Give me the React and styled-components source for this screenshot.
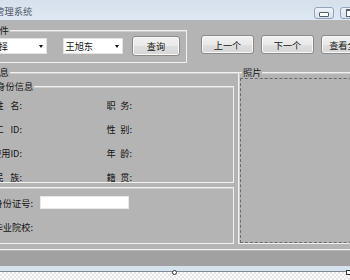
import React from 'react'
import styled, { createGlobalStyle } from 'styled-components'

const GlobalStyle = createGlobalStyle`
  html, body {
    margin: 0;
    padding: 0;
  }
  body {
    font-family: "Noto Sans CJK SC", "Noto Sans", sans-serif;
    font-size: 9.2px;
    color: #141414;
  }
`

function App() {
  return (
    <Viewport>
      <GlobalStyle />
      <Window>
        <TitleBar>
          <TitleText>员工管理系统</TitleText>
          <Controls>
            <CtrlBtn>
              <MinGlyph />
            </CtrlBtn>
            <CtrlBtn>
              <MaxGlyph />
            </CtrlBtn>
            <CtrlBtn $close />
          </Controls>
        </TitleBar>
        <Client>
          <TopRow>
            <ConditionGroup>
              <Legend $left={5}>查询条件</Legend>
              <Combo $w={69} $mr={16}>
                <span>请选择</span>
                <Arrow />
              </Combo>
              <Combo $w={60} $mr={9}>
                <span>王旭东</span>
                <Arrow />
              </Combo>
              <Button $w={48} $h={20}>查询</Button>
            </ConditionGroup>
            <NavButtons>
              <Button $w={53} $h={19}>上一个</Button>
              <Button $w={53} $h={19}>下一个</Button>
              <Button $w={53} $h={19}>查看全部</Button>
            </NavButtons>
          </TopRow>
          <InfoGroup>
            <Legend $left={5}>员工信息</Legend>
            <LeftCol>
              <IdentityGroup>
                <Legend $left={5}>员工身份信息</Legend>
                <Label $right>姓{'\u2002 '}名:</Label>
                <span />
                <Label>职{'\u2002'}务:</Label>
                <Label $right>员工{'\u2002 '}ID:</Label>
                <span />
                <Label>性{'\u2002'}别:</Label>
                <Label $right>使用ID:</Label>
                <span />
                <Label>年{'\u2002'}龄:</Label>
                <Label $right>民{'\u2002 '}族:</Label>
                <span />
                <Label>籍{'\u2002'}贯:</Label>
              </IdentityGroup>
              <DetailGroup>
                <Label $right>身份证号:</Label>
                <TextBox />
                <Label $right>毕业院校:</Label>
                <span />
              </DetailGroup>
            </LeftCol>
            <PhotoGroup>
              <Legend $left={3}>照片</Legend>
              <Picture />
            </PhotoGroup>
          </InfoGroup>
        </Client>
        <StatusBar />
        <BottomFrame />
      </Window>
      <Grip $x={172} $round />
      <Grip $x={346} />
    </Viewport>
  )
}

export default App

const Viewport = styled.div`
  position: relative;
  width: 350px;
  height: 280px;
  overflow: hidden;
  background-color: #f6f6f6;
  background-image: conic-gradient(#e6e6e6 25%, #fbfbfb 0 50%, #e6e6e6 0 75%, #fbfbfb 0);
  background-size: 4px 4px;
`

const Window = styled.div`
  width: 460px;
  margin-left: -56px;
  display: flex;
  flex-direction: column;
`

const TitleBar = styled.div`
  height: 20px;
  display: flex;
  align-items: flex-start;
  padding: 0 6px 0 33px;
  background: linear-gradient(#d5e0ec, #dfe8f2);
  box-sizing: border-box;
`

const TitleText = styled.div`
  margin-top: 5px;
  line-height: 12px;
  color: #4e5865;
`

const Controls = styled.div`
  margin-left: auto;
  margin-top: 7px;
  display: flex;
  gap: 6px;
  & > div:last-child {
    margin-left: -4px;
  }
`

const CtrlBtn = styled.div`
  width: ${(p) => (p.$close ? 36 : 20)}px;
  height: 12px;
  box-sizing: border-box;
  border: 1px solid #93a4ba;
  border-radius: 3px;
  background: linear-gradient(#eef3f9, #d8e2ee);
  display: flex;
  align-items: center;
  justify-content: center;
`

const MinGlyph = styled.span`
  width: 8px;
  height: 3px;
  border: 1px solid #55606e;
  border-radius: 1px;
  background: #fff;
  margin-top: 2px;
`

const MaxGlyph = styled.span`
  width: 6px;
  height: 5px;
  border: 1px solid #55606e;
  border-top-width: 2px;
  background: #fff;
`

const Client = styled.div`
  background: #b4b4b4;
  padding: 10px 10px 1px 21px;
  display: flex;
  flex-direction: column;
  gap: 9px;
`

const TopRow = styled.div`
  display: flex;
  align-items: flex-start;
`

const Group = styled.div`
  position: relative;
  border: 1px solid #f1f1f1;
  box-shadow: inset 1px 1px 0 #cdcdcd;
`

const Legend = styled.span`
  position: absolute;
  top: -7px;
  left: ${(p) => p.$left}px;
  padding: 0 1px;
  line-height: 12px;
  background: #b4b4b4;
  white-space: nowrap;
`

const ConditionGroup = styled(Group)`
  display: flex;
  align-items: center;
  padding: 5px 6px 6px 12px;
`

const Combo = styled.div`
  width: ${(p) => p.$w}px;
  margin-right: ${(p) => p.$mr}px;
  height: 16px;
  box-sizing: border-box;
  border: 1px solid #e2e2e2;
  background: #fff;
  display: flex;
  align-items: center;
  justify-content: space-between;
  padding: 0 3px 0 1.5px;
  line-height: 12px;
  white-space: nowrap;
`

const Arrow = styled.span`
  width: 0;
  height: 0;
  border-left: 2.5px solid transparent;
  border-right: 2.5px solid transparent;
  border-top: 3px solid #111;
`

const Button = styled.div`
  width: ${(p) => p.$w}px;
  height: ${(p) => p.$h}px;
  box-sizing: border-box;
  border: 1px solid #8b8b8b;
  border-radius: 3px;
  background: linear-gradient(#f1f1f1, #e9e9e9 50%, #dfdfdf 50%, #d6d6d6);
  box-shadow: inset 0 0 0 1px #f8f8f8;
  display: flex;
  align-items: center;
  justify-content: center;
  white-space: nowrap;
  overflow: hidden;
  flex-shrink: 0;
`

const NavButtons = styled.div`
  margin: 5px 0 0 14px;
  display: flex;
  gap: 7px;
`

const InfoGroup = styled(Group)`
  display: flex;
  padding: 0 0 5px 5px;
`

const LeftCol = styled.div`
  width: 263px;
  padding-top: 13px;
  margin-right: 4px;
  display: flex;
  flex-direction: column;
  gap: 4px;
`

const IdentityGroup = styled(Group)`
  display: grid;
  grid-template-columns: 50px 84.5px 1fr;
  grid-auto-rows: 10px;
  row-gap: 14px;
  align-items: center;
  padding-top: 13px;
`

const Label = styled.span`
  line-height: 10px;
  white-space: pre;
  justify-self: ${(p) => (p.$right ? 'end' : 'start')};
`

const DetailGroup = styled(Group)`
  display: grid;
  grid-template-columns: 61px 89px;
  grid-template-rows: 13px 10px;
  column-gap: 6.5px;
  row-gap: 12.5px;
  align-items: center;
  padding: 8px 0 11.5px;
`

const TextBox = styled.div`
  height: 13px;
  box-sizing: border-box;
  background: #fff;
  border: 1px solid #e8e8e8;
`

const PhotoGroup = styled(Group)`
  flex: 1;
  border-top: none;
  box-shadow: inset 1px 0 0 #cdcdcd;
  display: flex;
  padding: 5px 1px 0 1px;
`

const Picture = styled.div`
  flex: 1;
  border: 1px dashed #6a6a6a;
`

const StatusBar = styled.div`
  height: 15px;
  background: #a1a1a1;
`

const BottomFrame = styled.div`
  height: 5px;
  background: #d7e2ef;
  border-bottom: 1px solid #7f8b99;
`

const Grip = styled.div`
  position: absolute;
  left: ${(p) => p.$x}px;
  top: 270px;
  width: 5px;
  height: 5px;
  box-sizing: border-box;
  border: 1px solid #333;
  border-radius: ${(p) => (p.$round ? '50%' : '0')};
  background: #fff;
`
